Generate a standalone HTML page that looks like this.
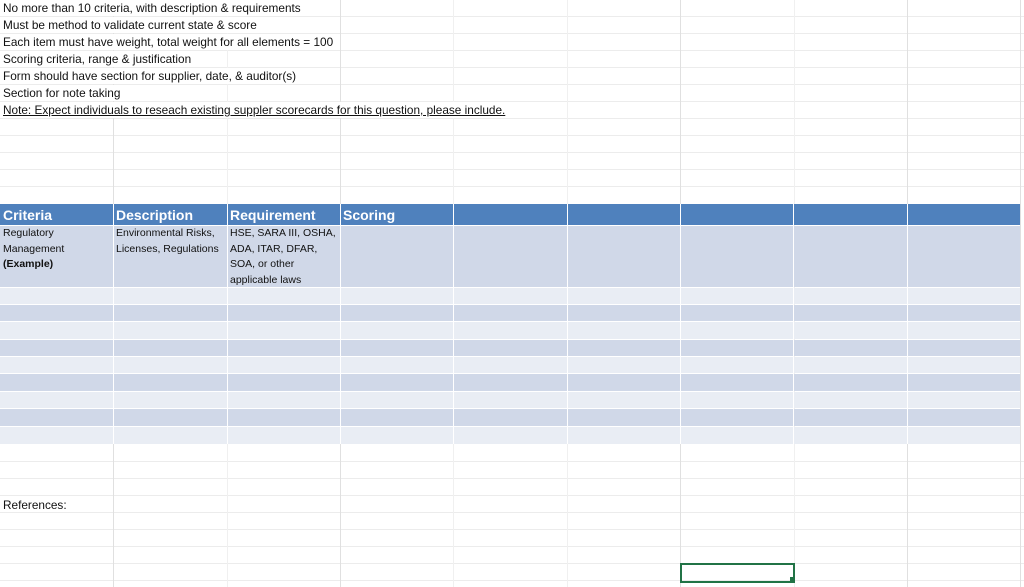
<!DOCTYPE html>
<html><head><meta charset="utf-8"><style>
body{margin:0;width:1024px;height:587px;overflow:hidden;background:#fff;position:relative;font-family:"Liberation Sans",sans-serif;color:#111}
.h{position:absolute;left:0;width:1024px;height:1px;background:#ececec}
.v{position:absolute;top:0;height:587px;width:1px;background:#e0e0e0}
.r{position:absolute;left:0;width:1020px}
.t{position:absolute;left:0;padding-left:3px;padding-right:2px;font-size:11.8px;line-height:16px;white-space:nowrap;background:#fff}
.hd{position:absolute;font-size:14px;font-weight:bold;color:#fff;top:204px;line-height:22px}
.d{position:absolute;font-size:10.5px;line-height:15.5px;top:226px}
</style></head><body>
<div class="h" style="top:16px"></div><div class="h" style="top:33px"></div><div class="h" style="top:50px"></div><div class="h" style="top:67px"></div><div class="h" style="top:84px"></div><div class="h" style="top:101px"></div><div class="h" style="top:118px"></div><div class="h" style="top:135px"></div><div class="h" style="top:152px"></div><div class="h" style="top:169px"></div><div class="h" style="top:186px"></div><div class="h" style="top:461px"></div><div class="h" style="top:478px"></div><div class="h" style="top:495px"></div><div class="h" style="top:512px"></div><div class="h" style="top:529px"></div><div class="h" style="top:546px"></div><div class="h" style="top:563px"></div><div class="h" style="top:580px"></div>
<div class="v" style="left:113px"></div><div class="v" style="left:227px;background:#f0f0f0"></div><div class="v" style="left:340px"></div><div class="v" style="left:453px;background:#f0f0f0"></div><div class="v" style="left:567px;background:#f0f0f0"></div><div class="v" style="left:680px"></div><div class="v" style="left:794px;background:#f0f0f0"></div><div class="v" style="left:907px"></div><div class="v" style="left:1020px"></div>

<div class="t" style="top:0">No more than 10 criteria, with description &amp; requirements</div>
<div class="t" style="top:17px">Must be method to validate current state &amp; score</div>
<div class="t" style="top:34px">Each item must have weight, total weight for all elements = 100</div>
<div class="t" style="top:51px">Scoring criteria, range &amp; justification</div>
<div class="t" style="top:68px">Form should have section for supplier, date, &amp; auditor(s)</div>
<div class="t" style="top:85px">Section for note taking</div>
<div class="t" style="top:102px;text-decoration:underline">Note: Expect individuals to reseach existing suppler scorecards for this question, please include.</div>

<div class="r" style="top:204px;height:21px;background:#4f81bd"></div>
<div class="r" style="top:226px;height:61px;background:#d0d8e8"></div>
<div class="r" style="top:288px;height:16px;background:#e9edf4"></div>
<div class="r" style="top:305px;height:16px;background:#d0d8e8"></div>
<div class="r" style="top:322px;height:17px;background:#e9edf4"></div>
<div class="r" style="top:340px;height:16px;background:#d0d8e8"></div>
<div class="r" style="top:357px;height:16px;background:#e9edf4"></div>
<div class="r" style="top:374px;height:17px;background:#d0d8e8"></div>
<div class="r" style="top:392px;height:16px;background:#e9edf4"></div>
<div class="r" style="top:409px;height:17px;background:#d0d8e8"></div>
<div class="r" style="top:427px;height:17px;background:#e9edf4"></div>
<div style="position:absolute;top:204px;height:240px;left:113px;width:1px;background:#fff"></div>
<div style="position:absolute;top:204px;height:240px;left:227px;width:1px;background:#fff"></div>
<div style="position:absolute;top:204px;height:240px;left:340px;width:1px;background:#fff"></div>
<div style="position:absolute;top:204px;height:240px;left:453px;width:1px;background:#fff"></div>
<div style="position:absolute;top:204px;height:240px;left:567px;width:1px;background:#fff"></div>
<div style="position:absolute;top:204px;height:240px;left:680px;width:1px;background:#fff"></div>
<div style="position:absolute;top:204px;height:240px;left:793px;width:1px;background:#fff"></div>
<div style="position:absolute;top:204px;height:240px;left:907px;width:1px;background:#fff"></div>

<div class="hd" style="left:3px">Criteria</div>
<div class="hd" style="left:116px">Description</div>
<div class="hd" style="left:230px">Requirement</div>
<div class="hd" style="left:343px">Scoring</div>
<div class="d" style="left:3px">Regulatory<br>Management<br><b>(Example)</b></div>
<div class="d" style="left:116px">Environmental Risks,<br>Licenses, Regulations</div>
<div class="d" style="left:230px">HSE, SARA III, OSHA,<br>ADA, ITAR, DFAR,<br>SOA, or other<br>applicable laws</div>

<div class="t" style="top:497px;background:none">References:</div>
<div style="position:absolute;left:680px;top:563px;width:111px;height:16px;border:2px solid #217346"></div>
<div style="position:absolute;left:790px;top:577px;width:5px;height:5px;background:#217346"></div>
</body></html>
